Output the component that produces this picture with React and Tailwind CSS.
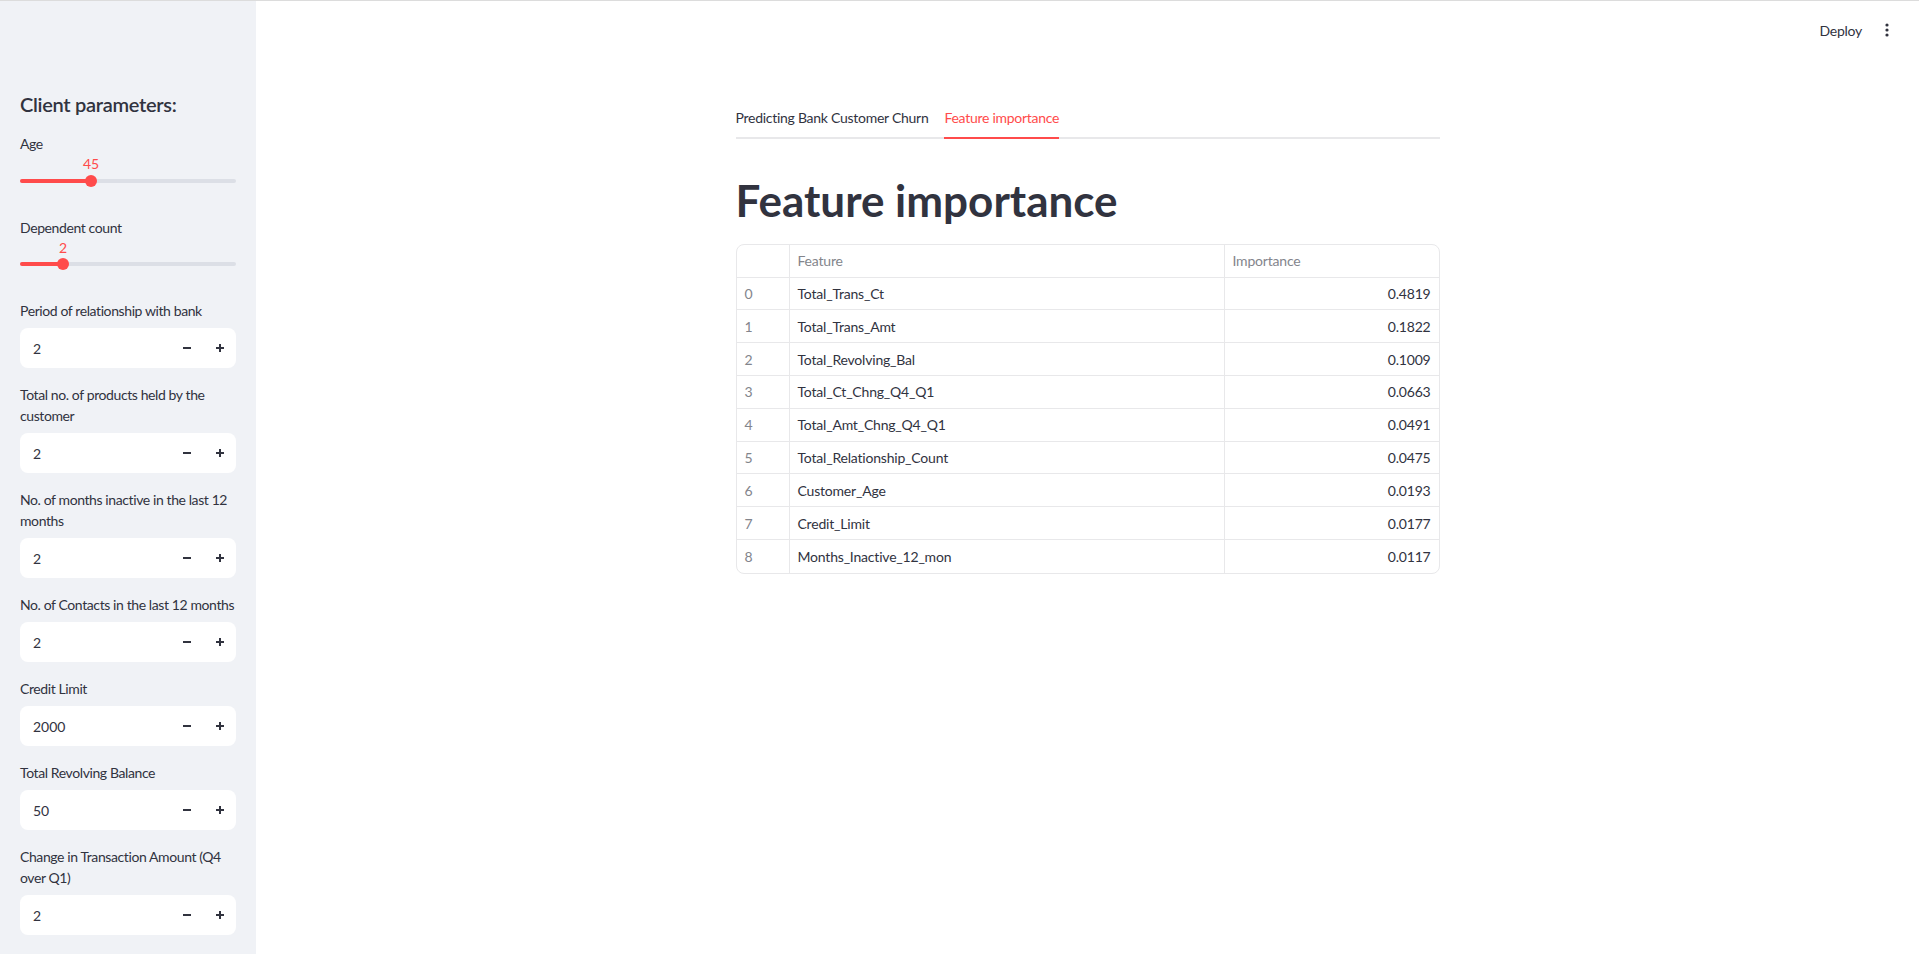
import React from "react";

const FONT = "[font-family:Lato,'Noto_Sans',sans-serif]";

function Label({ children }) {
  return (
    <div className="text-[14px] leading-[21px] tracking-[-0.4px] pb-[7px] text-[#31333f]">{children}</div>
  );
}

function Slider({ label, value, pos }) {
  return (
    <div>
      <Label>{label}</Label>
      <div className="relative h-[39.5px]">
        <div className="absolute left-0 right-0 top-[17.5px] h-[4px] rounded-full bg-[#dcdfe6]" />
        <div
          className="absolute left-0 top-[17.5px] h-[4px] rounded-full bg-[#ff4b4b]"
          style={{ width: pos }}
        />
        <div
          className="absolute top-[13.5px] h-[12px] w-[12px] -ml-[6px] rounded-full bg-[#ff4b4b]"
          style={{ left: pos }}
        />
        <div
          className="absolute top-[-8px] w-[40px] -ml-[20px] text-center text-[14px] leading-[21px] text-[#ff4b4b]"
          style={{ left: pos }}
        >
          {value}
        </div>
      </div>
    </div>
  );
}

function NumberInput({ label, value }) {
  return (
    <div>
      <Label>{label}</Label>
      <div className="flex h-10 items-center rounded-lg bg-white">
        <div className="flex-1 pl-[13px] text-[14px] text-[#31333f]">{value}</div>
        <div className="flex h-10 w-8 items-center justify-center">
          <svg width="10" height="10" viewBox="0 0 10 10">
            <rect x="1" y="4" width="8" height="2" fill="#31333f" />
          </svg>
        </div>
        <div className="flex h-10 w-[33px] items-center justify-center">
          <svg width="10" height="10" viewBox="0 0 10 10">
            <rect x="1" y="4" width="8" height="2" fill="#31333f" />
            <rect x="4" y="1" width="2" height="8" fill="#31333f" />
          </svg>
        </div>
      </div>
    </div>
  );
}

const rows = [
  ["0", "Total_Trans_Ct", "0.4819"],
  ["1", "Total_Trans_Amt", "0.1822"],
  ["2", "Total_Revolving_Bal", "0.1009"],
  ["3", "Total_Ct_Chng_Q4_Q1", "0.0663"],
  ["4", "Total_Amt_Chng_Q4_Q1", "0.0491"],
  ["5", "Total_Relationship_Count", "0.0475"],
  ["6", "Customer_Age", "0.0193"],
  ["7", "Credit_Limit", "0.0177"],
  ["8", "Months_Inactive_12_mon", "0.0117"],
];

export default function App() {
  return (
    <div className={`${FONT} relative flex h-[954px] w-full overflow-hidden bg-white text-[#31333f]`}>
      <div className="absolute left-0 right-0 top-0 z-10 h-[1px] bg-[#dcdcdc]" />
      {/* Sidebar */}
      <aside className="flex w-[256px] shrink-0 flex-col gap-4 bg-[#f0f2f6] px-5 pt-[91px]">
        <h3 className="text-[20px] font-semibold leading-[26px] tracking-[-0.3px] text-[#31333f]">Client parameters:</h3>
        <Slider label="Age" value="45" pos={71} />
        <Slider label="Dependent count" value="2" pos={43} />
        <NumberInput label="Period of relationship with bank" value="2" />
        <NumberInput label="Total no. of products held by the customer" value="2" />
        <NumberInput label="No. of months inactive in the last 12 months" value="2" />
        <NumberInput label="No. of Contacts in the last 12 months" value="2" />
        <NumberInput label="Credit Limit" value="2000" />
        <NumberInput label="Total Revolving Balance" value="50" />
        <NumberInput label="Change in Transaction Amount (Q4 over Q1)" value="2" />
      </aside>

      {/* Main */}
      <main className="relative flex-1">
        <header className="absolute right-0 top-0 flex h-[60px] items-center gap-[23px] pr-[30px]">
          <span className="text-[14px] tracking-[-0.27px] text-[#31333f]">Deploy</span>
          <svg width="4" height="14" viewBox="0 0 4 14">
            <circle cx="2" cy="2" r="1.6" fill="#31333f" />
            <circle cx="2" cy="7" r="1.6" fill="#31333f" />
            <circle cx="2" cy="12" r="1.6" fill="#31333f" />
          </svg>
        </header>

        <div className="mx-auto w-[704px] pt-[99px]">
          {/* Tabs */}
          <div className="flex gap-4 border-b-2 border-[#e8e8ea]">
            <div className="-mb-[2px] flex h-[40px] items-center border-b-2 border-transparent pb-[2px] text-[14px] tracking-[-0.27px] text-[#31333f]">
              Predicting Bank Customer Churn
            </div>
            <div className="-mb-[2px] flex h-[40px] items-center border-b-2 border-[#ff4b4b] pb-[2px] text-[14px] tracking-[-0.27px] text-[#ff4b4b]">
              Feature importance
            </div>
          </div>

          <div className="pt-4">
            <h1 className="pb-[17px] pt-[19px] text-[44px] font-bold leading-[52.8px] text-[#31333f]">
              Feature importance
            </h1>

            <div className="overflow-hidden rounded-lg border border-[#e8e8ea] text-[14px] tracking-[-0.2px]">
              <div className="grid h-[32.8px] grid-cols-[53px_435px_1fr] border-b border-[#e8e8ea] text-[#83858c]">
                <div className="border-r border-[#e8e8ea]" />
                <div className="flex items-center border-r border-[#e8e8ea] px-2">Feature</div>
                <div className="flex items-center px-2">Importance</div>
              </div>
              {rows.map((r, i) => (
                <div
                  key={r[0]}
                  className={`grid h-[32.8px] grid-cols-[53px_435px_1fr] ${i < rows.length - 1 ? "border-b border-[#e8e8ea]" : ""}`}
                >
                  <div className="flex items-center border-r border-[#e8e8ea] px-2 text-[#83858c]">{r[0]}</div>
                  <div className="flex items-center border-r border-[#e8e8ea] px-2 text-[#31333f]">{r[1]}</div>
                  <div className="flex items-center justify-end px-2 text-[#31333f]">{r[2]}</div>
                </div>
              ))}
            </div>
          </div>
        </div>
      </main>
    </div>
  );
}
